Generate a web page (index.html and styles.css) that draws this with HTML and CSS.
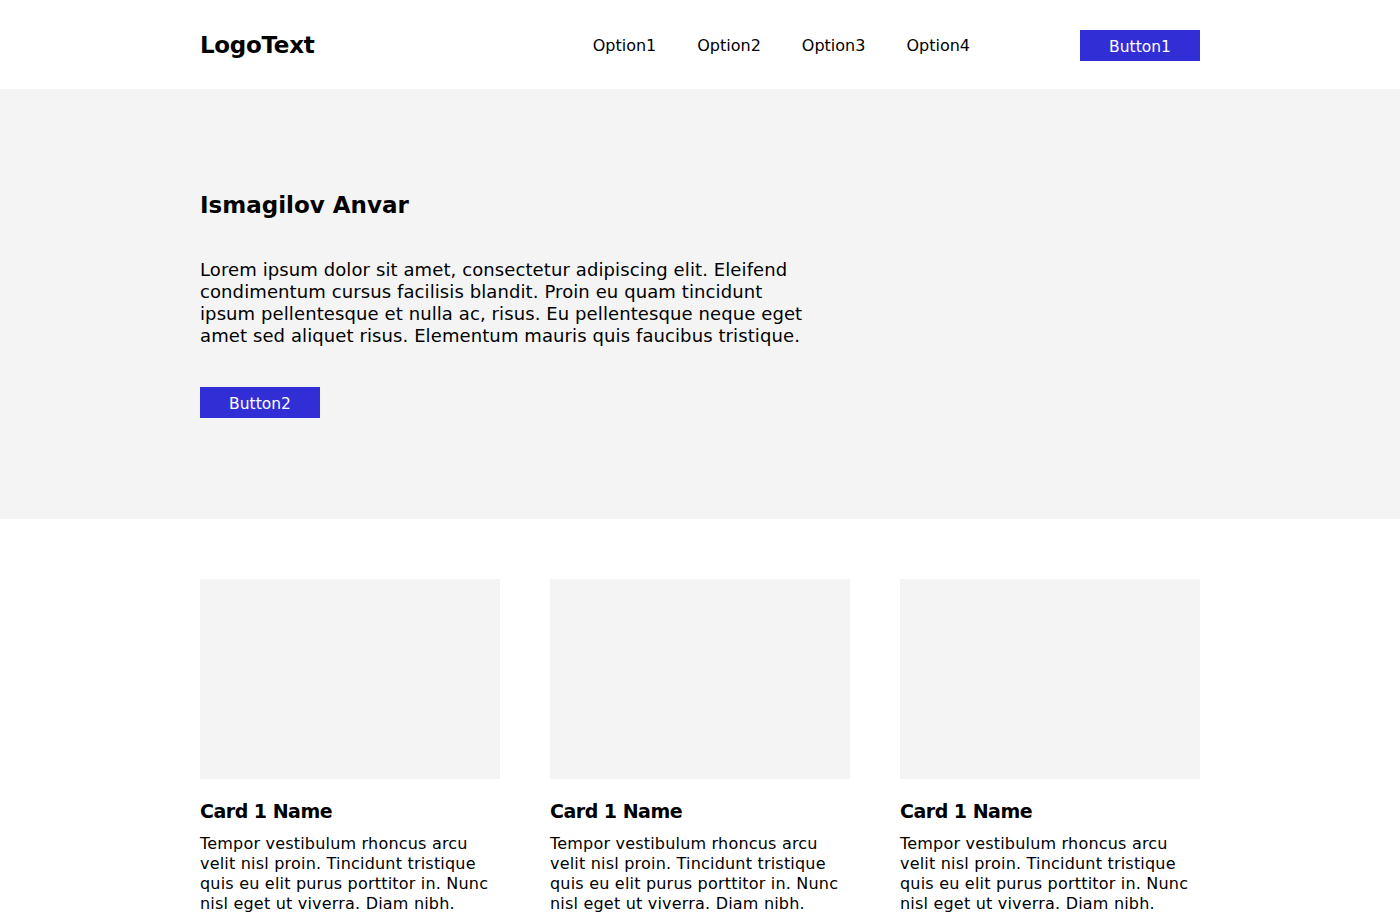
FILE: index.html
```html
<!DOCTYPE html>
<html lang="en">
<head>
<meta charset="utf-8">
<title>LogoText</title>
<link rel="stylesheet" href="styles.css">
</head>
<body>
<header class="header">
  <div class="container header-inner">
    <div class="logo">LogoText</div>
    <nav class="nav">
      <a class="nav-link" href="#">Option1</a>
      <a class="nav-link" href="#">Option2</a>
      <a class="nav-link" href="#">Option3</a>
      <a class="nav-link" href="#">Option4</a>
    </nav>
    <button class="btn btn-header">Button1</button>
  </div>
</header>
<section class="hero">
  <div class="container">
    <h1 class="hero-title">Ismagilov Anvar</h1>
    <p class="hero-text">Lorem ipsum dolor sit amet, consectetur adipiscing elit. Eleifend condimentum cursus facilisis blandit. Proin eu quam tincidunt ipsum pellentesque et nulla ac, risus. Eu pellentesque neque eget amet sed aliquet risus. Elementum mauris quis faucibus tristique.</p>
    <button class="btn">Button2</button>
  </div>
</section>
<section class="cards">
  <div class="container cards-grid">
    <article class="card">
      <div class="card-img"></div>
      <h2 class="card-title">Card 1 Name</h2>
      <p class="card-text">Tempor vestibulum rhoncus arcu velit nisl proin. Tincidunt tristique quis eu elit purus porttitor in. Nunc nisl eget ut viverra. Diam nibh.</p>
    </article>
    <article class="card">
      <div class="card-img"></div>
      <h2 class="card-title">Card 1 Name</h2>
      <p class="card-text">Tempor vestibulum rhoncus arcu velit nisl proin. Tincidunt tristique quis eu elit purus porttitor in. Nunc nisl eget ut viverra. Diam nibh.</p>
    </article>
    <article class="card">
      <div class="card-img"></div>
      <h2 class="card-title">Card 1 Name</h2>
      <p class="card-text">Tempor vestibulum rhoncus arcu velit nisl proin. Tincidunt tristique quis eu elit purus porttitor in. Nunc nisl eget ut viverra. Diam nibh.</p>
    </article>
  </div>
</section>
</body>
</html>
```
FILE: styles.css
```css
* { box-sizing: border-box; }
html, body { margin: 0; padding: 0; }
body {
  font-family: "DejaVu Sans", "Liberation Sans", sans-serif;
  color: #000;
  background: #fff;
}
.container {
  width: 1000px;
  margin: 0 auto;
}
.header {
  height: 89px;
  background: #fff;
}
.header-inner {
  height: 89px;
  display: flex;
  align-items: center;
}
.logo {
  font-size: 23px;
  font-weight: 700;
  letter-spacing: -0.3px;
  line-height: 30px;
}
.nav {
  margin-left: auto;
  margin-top: 2px;
  display: flex;
  gap: 41px;
}
.nav-link {
  color: #000;
  text-decoration: none;
  font-size: 16px;
  line-height: 20px;
}
.btn {
  width: 120px;
  height: 31px;
  border: 0;
  padding: 3px 0 0;
  background: #322ed6;
  color: #fff;
  font-family: inherit;
  font-size: 15.5px;
  line-height: 28px;
  cursor: pointer;
}
.btn-header {
  margin-left: 110px;
  margin-top: 2px;
}
.hero {
  background: #f4f4f4;
  padding: 101px 0 101px;
}
.hero-title {
  margin: 0;
  font-size: 23px;
  font-weight: 700;
  line-height: 30px;
}
.hero-text {
  margin: 39px 0 40px;
  width: 610px;
  font-size: 18px;
  letter-spacing: 0.1px;
  line-height: 22px;
}
.hero .btn { display: block; }
.cards {
  padding: 60px 0 0;
}
.cards-grid {
  display: grid;
  grid-template-columns: repeat(3, 300px);
  gap: 50px;
}
.card-img {
  height: 200px;
  background: #f4f4f4;
}
.card-title {
  margin: 20px 0 0;
  font-size: 19px;
  font-weight: 700;
  letter-spacing: -0.5px;
  line-height: 24px;
}
.card-text {
  margin: 11px 0 0;
  font-size: 16px;
  letter-spacing: 0.2px;
  line-height: 20px;
}
```
